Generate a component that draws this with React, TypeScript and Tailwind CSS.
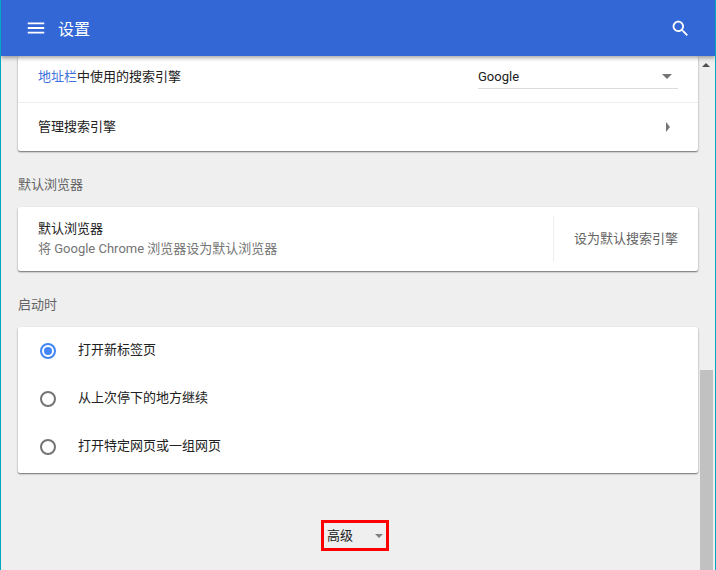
const font = "font-['Roboto','Noto_Sans_CJK_SC',sans-serif]";

function Caret({ className }: { className: string }) {
  return <span className={`block w-0 h-0 border-x-[5px] border-x-transparent border-t-[5px] ${className}`} />;
}

function Radio({ checked }: { checked?: boolean }) {
  return (
    <span
      className={`w-4 h-4 rounded-full border-2 flex items-center justify-center ${
        checked ? "border-[#4285f4]" : "border-[#757575]"
      }`}
    >
      {checked && <span className="w-2 h-2 rounded-full bg-[#4285f4]" />}
    </span>
  );
}

const cardClass = "bg-white rounded-[2px] shadow-[0_1px_2px_rgba(0,0,0,0.4),0_1px_1px_rgba(0,0,0,0.2)]";
const labelClass = "h-[56px] pt-[12px] flex items-center text-[#646464] text-[13px] font-normal";

export default function App() {
  const options = [
    { label: "打开新标签页", checked: true },
    { label: "从上次停下的地方继续" },
    { label: "打开特定网页或一组网页" },
  ];

  return (
    <div className={`h-[570px] w-[716px] overflow-hidden flex flex-col bg-[#efefef] border-x border-[#00a8c6] ${font}`}>
      {/* Header */}
      <header className="h-14 shrink-0 bg-[#3367d6] flex items-center justify-between pl-[24px] pr-[24px] text-white relative z-10 shadow-[0_2px_4px_rgba(0,0,0,0.35)]">
        <div className="flex items-center gap-[11px]">
          <svg width="22" height="22" viewBox="0 0 24 24" fill="currentColor">
            <path d="M3 18h18v-2H3v2zm0-5h18v-2H3v2zm0-7v2h18V6H3z" />
          </svg>
          <span className="text-[16px] mt-1">设置</span>
        </div>
        <svg width="21" height="21" viewBox="0 0 24 24" fill="currentColor">
          <path d="M15.5 14h-.79l-.28-.27C15.41 12.59 16 11.11 16 9.5 16 5.91 13.09 3 9.5 3S3 5.91 3 9.5 5.91 16 9.5 16c1.61 0 3.09-.59 4.23-1.57l.27.28v.79l5 4.99L20.49 19l-4.99-5zm-6 0C7.01 14 5 11.99 5 9.5S7.01 5 9.5 5 14 7.01 14 9.5 11.99 14 9.5 14z" />
        </svg>
      </header>

      <div className="flex flex-1 min-h-0">
        {/* Page content */}
        <main className="w-[699px] pl-[17px] pr-[2px] text-[13px] text-[#212121]">
          <section className={cardClass}>
            <div className="h-[47px] pb-1 flex items-center justify-between pl-5 pr-5 border-b border-[#eeeeee]">
              <span>
                <span className="text-[#3f73dc]">地址栏</span>中使用的搜索引擎
              </span>
              <div className="w-[200px] h-[24px] flex items-center justify-between border-b border-[#dcdcdc] pr-[6px]">
                <span>Google</span>
                <Caret className="border-t-[#757575]" />
              </div>
            </div>
            <div className="h-[48px] flex items-center justify-between pl-5 pr-[28px]">
              <span>管理搜索引擎</span>
              <span className="block w-0 h-0 border-y-[5px] border-y-transparent border-l-[4px] border-l-[#757575]" />
            </div>
          </section>

          <h2 className={labelClass}>默认浏览器</h2>

          <section className={`${cardClass} h-[64px] flex items-center pl-5`}>
            <div className="flex-1 leading-[20px]">
              <div>默认浏览器</div>
              <div className="text-[#757575]">将 Google Chrome 浏览器设为默认浏览器</div>
            </div>
            <div className="h-[46px] w-[145px] border-l border-[#eeeeee] flex items-center pl-5 text-[#646464]">
              设为默认搜索引擎
            </div>
          </section>

          <h2 className={labelClass}>启动时</h2>

          <section className={`${cardClass} pb-[2px]`}>
            {options.map((o) => (
              <div key={o.label} className="h-12 flex items-center gap-[22px] pl-[22px]">
                <Radio checked={o.checked} />
                <span className="mb-[2px]">{o.label}</span>
              </div>
            ))}
          </section>

          {/* Advanced toggle */}
          <div className="mt-[47px] flex justify-center pr-[6px]">
            <div className="w-[68px] h-[31px] border-[3px] border-[#ff0000] flex items-center justify-between pl-[3px] pr-[3px]">
              <span>高级</span>
              <span className="block w-0 h-0 border-x-[4px] border-x-transparent border-t-[4px] border-t-[#808080]" />
            </div>
          </div>
        </main>

        {/* Scrollbar */}
        <aside className="w-[15px] flex flex-col">
          <div className="h-[14px] mt-[5px] flex justify-center pr-[3px] pt-[2px]">
            <span className="block w-0 h-0 border-x-[4px] border-x-transparent border-b-[4px] border-b-[#505050]" />
          </div>
          <div className="mt-[295px] h-[200px] w-[13px] bg-[#c1c1c1]" />
        </aside>
      </div>
    </div>
  );
}
